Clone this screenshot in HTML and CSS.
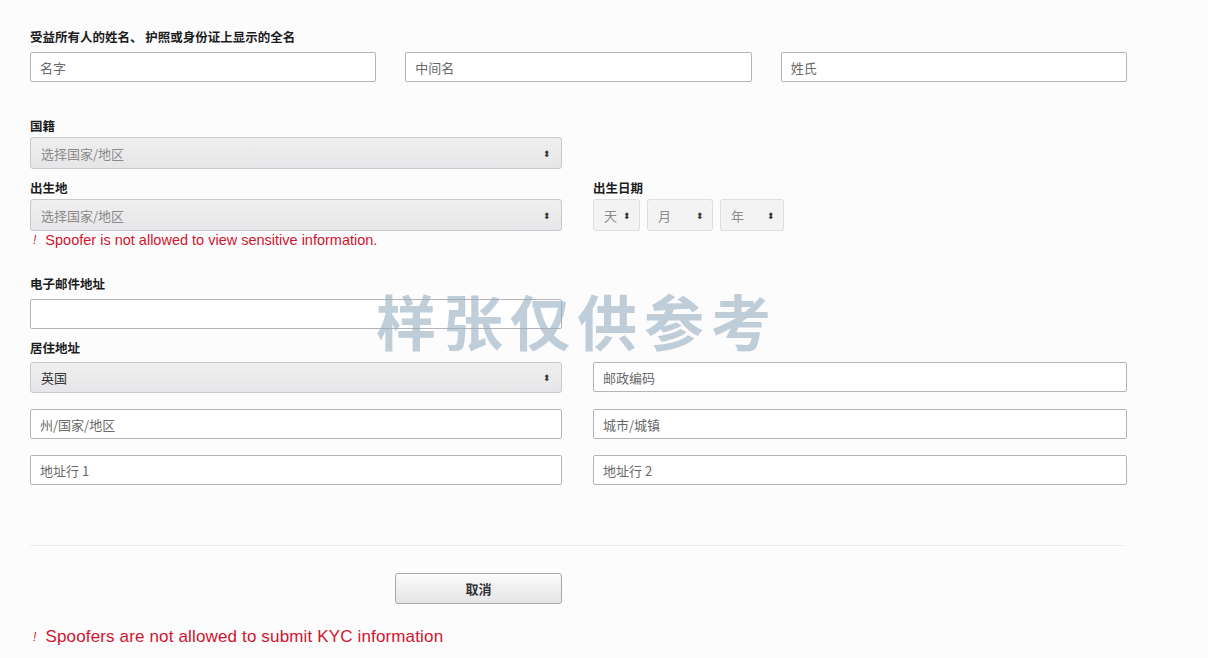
FILE: index.html
```html
<!DOCTYPE html>
<html lang="zh-CN">
<head>
    <meta charset="UTF-8">
    <title>KYC</title>
    <link rel="stylesheet" href="styles.css">
</head>
<body>
    <div class="page">
        <div class="label">受益所有人的姓名、 护照或身份证上显示的全名</div>
        <div class="name-row">
            <input class="field" type="text" placeholder="名字">
            <input class="field" type="text" placeholder="中间名">
            <input class="field" type="text" placeholder="姓氏">
        </div>

        <div class="label nationality">国籍</div>
        <div class="two-col">
            <div class="select tall"><span class="muted">选择国家/地区</span><span class="arrow">⬍</span></div>
        </div>

        <div class="two-col birth">
            <div>
                <div class="label">出生地</div>
                <div class="select tall"><span class="muted">选择国家/地区</span><span class="arrow">⬍</span></div>
            </div>
            <div>
                <div class="label">出生日期</div>
                <div class="date-row">
                    <div class="select small day"><span class="muted">天</span><span class="arrow">⬍</span></div>
                    <div class="select small month"><span class="muted">月</span><span class="arrow">⬍</span></div>
                    <div class="select small year"><span class="muted">年</span><span class="arrow">⬍</span></div>
                </div>
            </div>
        </div>
        <div class="error first"><span class="bang">!</span>Spoofer is not allowed to view sensitive information.</div>

        <div class="label email">电子邮件地址</div>
        <div class="two-col">
            <input class="field" type="text">
        </div>

        <div class="label address">居住地址</div>
        <div class="two-col address-grid">
            <div class="select"><span>英国</span><span class="arrow">⬍</span></div>
            <input class="field" type="text" placeholder="邮政编码">
            <input class="field" type="text" placeholder="州/国家/地区">
            <input class="field" type="text" placeholder="城市/城镇">
            <input class="field" type="text" placeholder="地址行 1">
            <input class="field" type="text" placeholder="地址行 2">
        </div>

        <hr class="divider">

        <div class="two-col actions">
            <button class="cancel">取消</button>
        </div>
        <div class="error last"><span class="bang">!</span>Spoofers are not allowed to submit KYC information</div>
    </div>

    <div class="watermark">样张仅供参考</div>
</body>
</html>
```

FILE: styles.css
```css
body {
    margin: 0;
    background-color: #fcfcfd;
    font-family: "Noto Sans CJK SC", "Liberation Sans", sans-serif;
    color: #222;
    font-size: 13px;
}
.page {
    width: 1097px;
    padding: 29px 30px 0;
}
.label {
    font-weight: bold;
    font-size: 12.5px;
    line-height: 16px;
    margin-bottom: 7px;
    color: #1d1d1d;
}
.name-row {
    display: grid;
    grid-template-columns: repeat(3, 1fr);
    column-gap: 29px;
}
.two-col {
    display: grid;
    grid-template-columns: 532px 534px;
    column-gap: 31px;
}
.field {
    box-sizing: border-box;
    height: 30px;
    width: 100%;
    border: 1px solid #b4b4b8;
    border-radius: 2px;
    background: #fff;
    padding: 0 9px;
    font-family: inherit;
    font-size: 13px;
    color: #333;
}
.field::placeholder {
    color: #6a6a6a;
}
.select {
    box-sizing: border-box;
    height: 31px;
    display: flex;
    align-items: center;
    justify-content: space-between;
    padding: 0 10px;
    border: 1px solid #c9c9cc;
    border-radius: 3px;
    background: linear-gradient(#efeff0, #e6e6e8);
    color: #333;
}
.select.tall {
    height: 32px;
}
.muted {
    color: #8a8a8a;
}
.arrow {
    font-size: 9px;
    color: #333;
}
.nationality {
    margin-top: 36px;
    margin-bottom: 3px;
}
.birth {
    margin-top: 11px;
}
.birth .label {
    margin-bottom: 3px;
}
.date-row {
    display: flex;
    gap: 7px;
}
.select.small {
    height: 32px;
    background: #f3f3f4;
    border-color: #dedee0;
    padding: 0 8px 0 10px;
}
.day { width: 47px; }
.month { width: 66px; }
.year { width: 64px; }
.error {
    font-family: "Liberation Sans", sans-serif;
    color: #d2142e;
    display: flex;
    align-items: center;
}
.bang {
    font-style: italic;
    font-size: 12px;
    margin: 0 9px 0 3px;
}
.error.first {
    margin-top: 0;
    font-size: 14.5px;
    line-height: 18px;
}
.email {
    margin-top: 27px;
}
.address {
    margin-top: 11px;
    margin-bottom: 6px;
}
.address-grid {
    row-gap: 16px;
}
.divider {
    border: none;
    border-top: 1px solid #ececee;
    margin: 60px 2px 0 0;
}
.actions {
    margin-top: 27px;
}
.cancel {
    justify-self: end;
    width: 167px;
    height: 31px;
    border: 1px solid #a9a9ad;
    border-radius: 3px;
    background: linear-gradient(#fbfbfb, #e4e4e6);
    font-family: inherit;
    font-size: 13px;
    font-weight: bold;
    color: #333;
}
.error.last {
    margin-top: 23px;
    font-size: 17px;
    line-height: 20px;
    letter-spacing: 0.15px;
}
.watermark {
    position: absolute;
    left: 376px;
    top: 280px;
    font-size: 60px;
    font-weight: bold;
    letter-spacing: 7px;
    color: rgba(150, 174, 194, 0.6);
    line-height: 80px;
}
```
